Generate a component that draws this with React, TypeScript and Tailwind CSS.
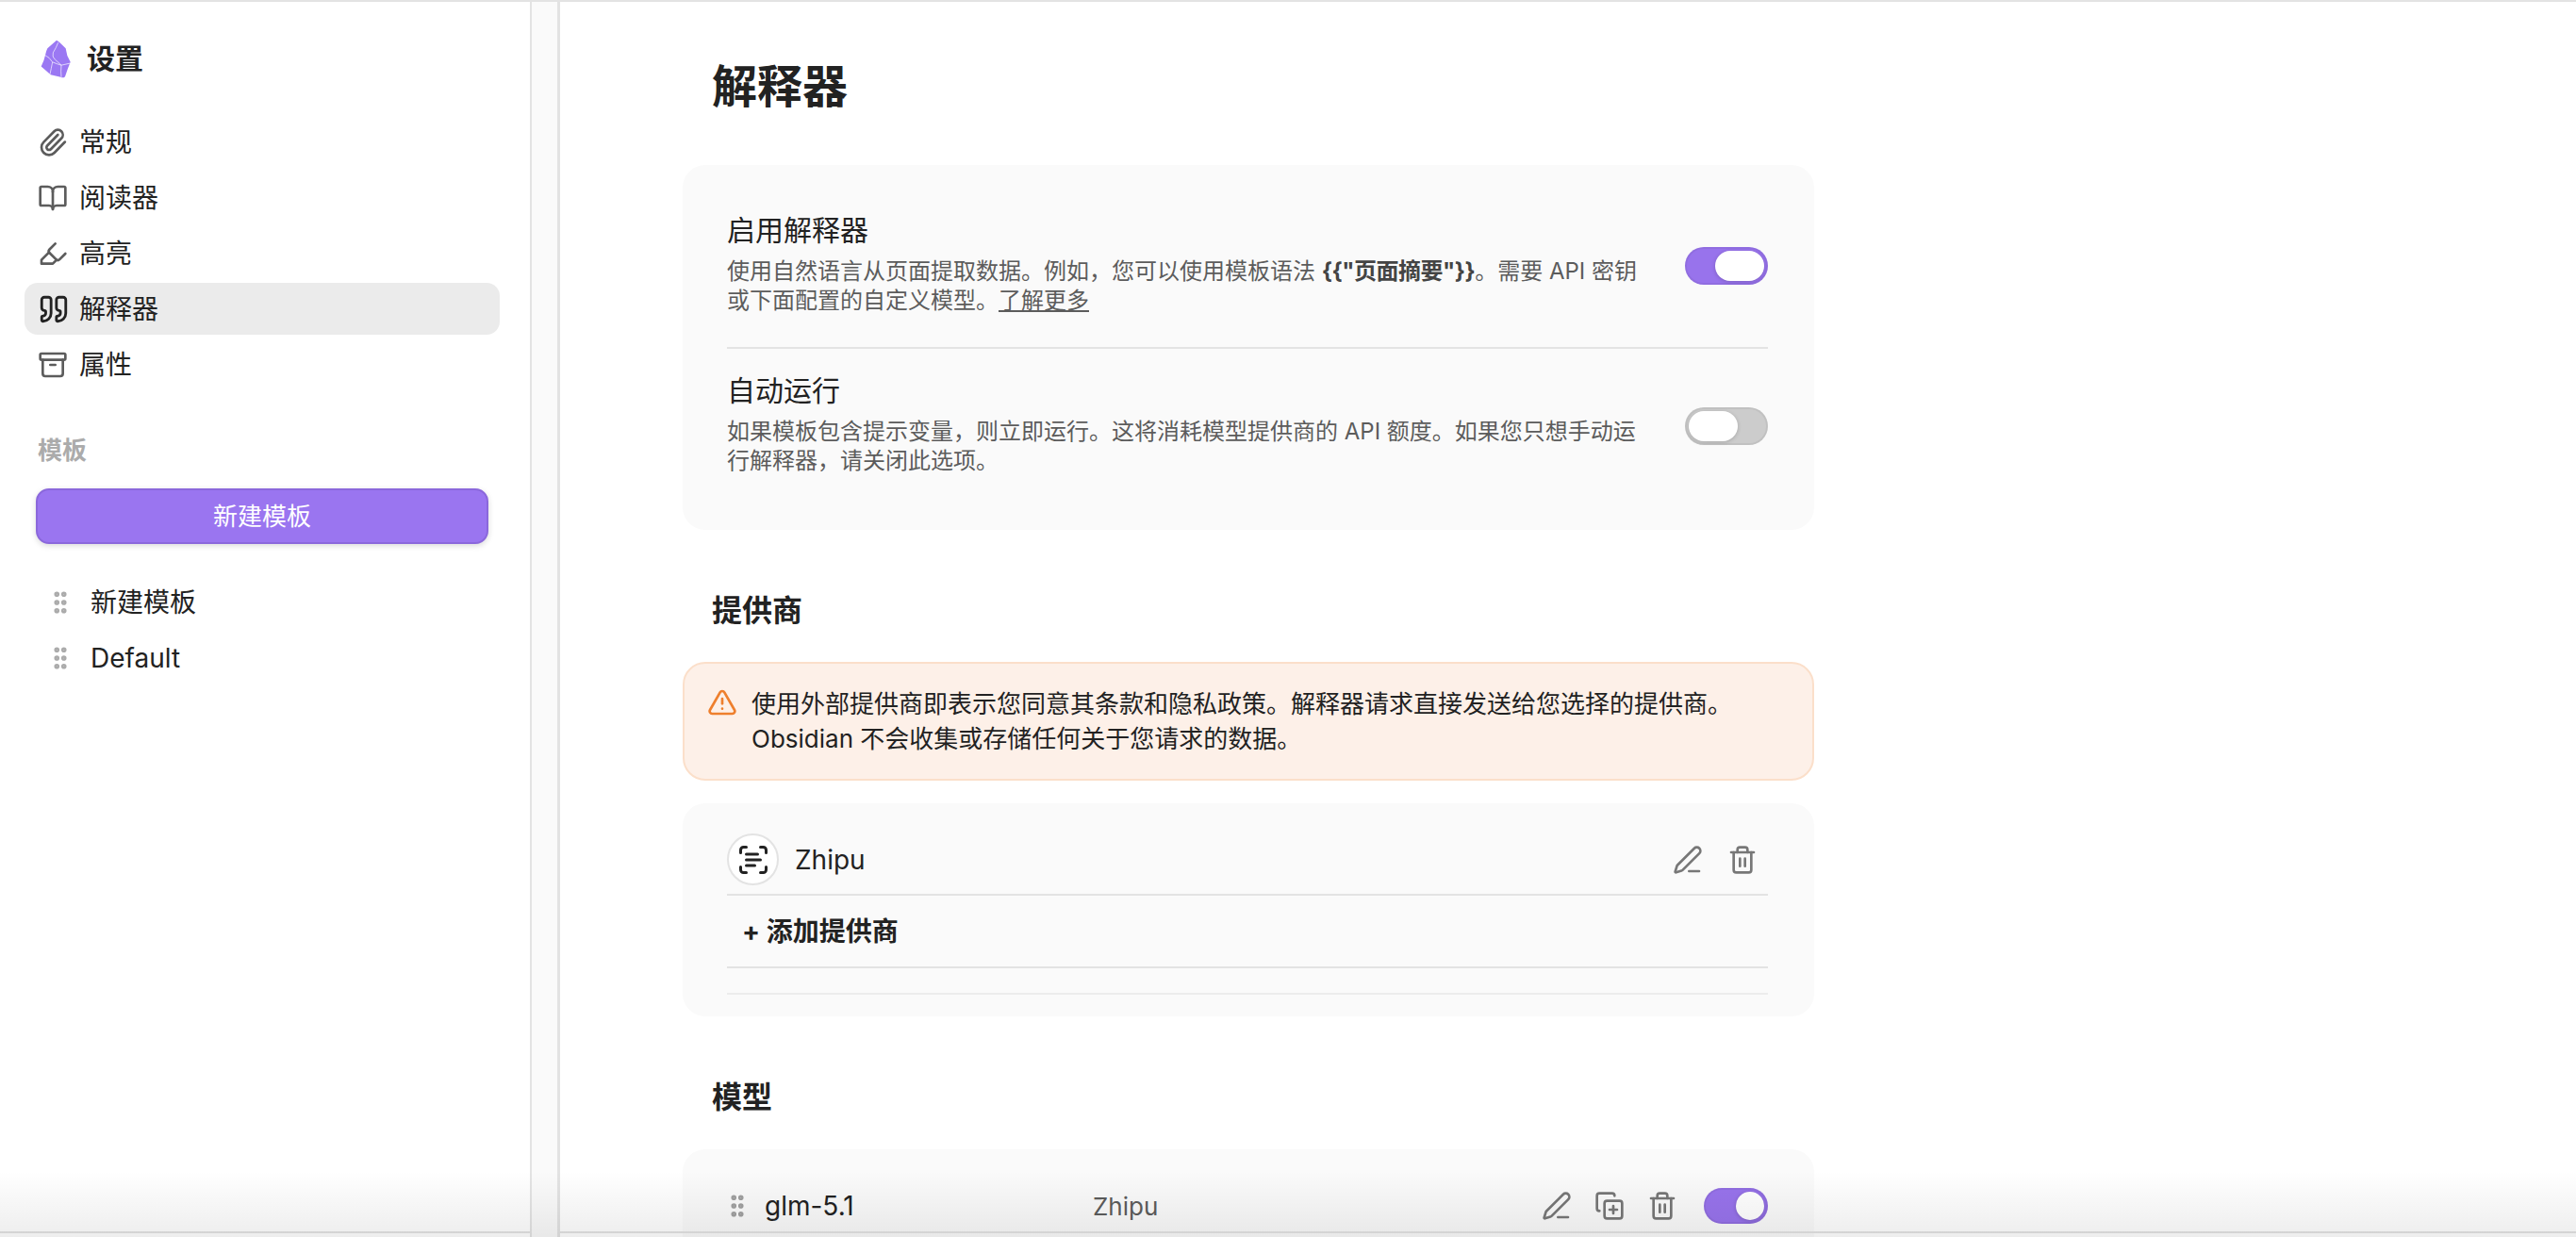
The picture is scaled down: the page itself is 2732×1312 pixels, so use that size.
import { Archive, BookOpen, CopyPlus, GripVertical, Highlighter, Paperclip, PenLine, Quote, ScanText, Trash2, TriangleAlert } from "lucide-react";
import type { ReactNode } from "react";

const navItems = [
  { label: "常规", icon: Paperclip, size: 32 },
  { label: "阅读器", icon: BookOpen, size: 32 },
  { label: "高亮", icon: Highlighter, size: 32 },
  { label: "解释器", icon: Quote, size: 34, active: true },
  { label: "属性", icon: Archive, size: 32 },
];

const ObsidianLogo = () => (
  <svg viewBox="70 35 96 122" className="w-[32px] h-[41px] shrink-0">
    <path d="M121 37 Q127 40 133 46 L150 62 Q152 84 165 106 Q156 128 148 152 Q142 158 134 154 L102 146 Q86 132 72 120 Q82 100 86 80 Q88 70 92 62 Z" fill="#9b78f3" />
    <path d="M126 44 Q120 60 110 76 Q106 90 116 98 Q128 108 136 116 M84 84 Q98 90 108 106 Q104 126 100 145 M108 106 Q122 112 136 116 L163 110 M136 116 Q134 136 136 154" fill="none" stroke="#fff" strokeWidth="2" />
  </svg>
);

const Toggle = ({ on, small }: { on?: boolean; small?: boolean }) => (
  <div
    className={`${small ? "w-[68px] h-[38px]" : "w-[88px] h-[40px]"} ${on ? "justify-end bg-[#9873ec]" : "justify-start bg-[#cccccc]"} shrink-0 flex items-center p-[4px] rounded-full shadow-[inset_0_0_0_2px_rgba(0,0,0,0.05)]`}
  >
    <div className={`${small ? "w-[30px] h-[30px]" : "w-[52px] h-[32px]"} bg-white rounded-full shadow-[0_1px_4px_rgba(0,0,0,0.18)]`} />
  </div>
);

const Card = ({ children }: { children: ReactNode }) => (
  <div className="bg-[#fafafa] rounded-[24px] pl-[47px] pr-[49px]">{children}</div>
);

const Setting = ({ title, children, on }: { title: string; children: ReactNode; on?: boolean }) => (
  <div className="flex items-center justify-between">
    <div className="whitespace-nowrap">
      <div className="text-[30px] leading-[36px] text-[#222222]">{title}</div>
      <div className="mt-[10px] text-[24px] leading-[31px] text-[#5c5c5c]">{children}</div>
    </div>
    <div className="mt-[3px]">
      <Toggle on={on} />
    </div>
  </div>
);

const Heading = ({ children }: { children: ReactNode }) => (
  <h2 className="ml-[31px] mt-[66px] text-[32px] leading-[40px] font-bold text-[#222222]">{children}</h2>
);

export default function App() {
  return (
    <div
      className="relative w-[2732px] h-[1312px] overflow-hidden bg-white border-t-2 border-[#e3e3e3] flex"
      style={{ fontFamily: 'Inter, "Noto Sans CJK SC", sans-serif' }}
      lang="zh-CN"
    >
      {/* Sidebar */}
      <aside className="relative w-[564px] shrink-0 border-r-2 border-[#e3e3e3] pt-[38px]">
        <div className="flex items-center gap-[17px] pl-[43px] h-[44px]">
          <ObsidianLogo />
          <span className="text-[30px] leading-[44px] font-bold text-[#222222]">设置</span>
        </div>
        <nav className="mt-[39px] ml-[26px] w-[504px] flex flex-col gap-[4px]">
          {navItems.map(({ label, icon: Icon, size, active }) => (
            <div
              key={label}
              className={`h-[55px] flex items-center pl-[14px] rounded-[14px] text-[28px] text-[#222222] ${active ? "bg-[#ebebeb]" : ""}`}
            >
              <span className="w-[44px] shrink-0">
                <Icon size={size} strokeWidth={2} className={active ? "text-[#222222]" : "text-[#5c5c5c]"} />
              </span>
              <span>{label}</span>
            </div>
          ))}
        </nav>
        <div className="mt-[48px] ml-[40px] text-[26px] leading-[32px] font-bold text-[#ababab]">模板</div>
        <button className="mt-[24px] ml-[38px] w-[480px] h-[59px] rounded-[14px] bg-[#9a75f0] border-2 border-[#8b68dc] text-white text-[26px] shadow-[0_2px_6px_rgba(0,0,0,0.15)]">
          新建模板
        </button>
        <div className="mt-[34px] ml-[49px] flex flex-col gap-[4px]">
          {["新建模板", "Default"].map((name) => (
            <div key={name} className="h-[55px] flex items-center gap-[17px] text-[28px] text-[#222222]">
              <GripVertical size={30} strokeWidth={2.5} className="text-[#ababab]" />
              <span>{name}</span>
            </div>
          ))}
        </div>
        <div className="absolute left-0 right-0 bottom-[4px] h-[2px] bg-[#e3e3e3]" />
      </aside>

      {/* Scroll gutter */}
      <div className="w-[30px] shrink-0 bg-[#fafafa] border-r-[3px] border-[#e3e3e3]" />

      {/* Main */}
      <main className="relative flex-1 pt-[60px] pl-[130px]">
        <div className="w-[1200px]">
          <h1 className="ml-[31px] text-[48px] leading-[60px] font-bold text-[#222222]">解释器</h1>

          <div className="mt-[53px] bg-[#fafafa] rounded-[24px] pl-[47px] pr-[49px] pt-[51px] h-[387px]">
            <Setting title="启用解释器" on>
              {"使用自然语言从页面提取数据。例如\uFF0C您可以使用模板语法 "}
              <b className="font-bold tracking-[-0.5px] text-[#444444]">{'{{"页面摘要"}}'}</b>。需要 API 密钥
              <br />
              或下面配置的自定义模型。<span className="underline">了解更多</span>
            </Setting>
            <div className="h-[2px] bg-[#e3e3e3] mt-[34px] mb-[26px]" />
            <Setting title="自动运行">
              {"如果模板包含提示变量\uFF0C则立即运行。这将消耗模型提供商的 API 额度。如果您只想手动运"}
              <br />
              {"行解释器\uFF0C请关闭此选项。"}
            </Setting>
          </div>

          <Heading>提供商</Heading>
          <div className="mt-[34px] flex gap-[15px] bg-[#fdf0e8] border-2 border-[#fbdfca] rounded-[24px] pl-[24px] py-[24px] text-[26px] leading-[37px] text-[#222222]">
            <TriangleAlert size={32} strokeWidth={2} className="text-[#ee7f2d] mt-[1px] shrink-0" />
            <div className="whitespace-nowrap">
              使用外部提供商即表示您同意其条款和隐私政策。解释器请求直接发送给您选择的提供商。
              <br />
              Obsidian 不会收集或存储任何关于您请求的数据。
            </div>
          </div>

          <div className="mt-[24px]">
            <Card>
              <div className="pt-[32px] pb-[9px] flex items-center">
                <div className="w-[55px] h-[55px] rounded-full bg-white border-2 border-[#e3e3e3] flex items-center justify-center">
                  <ScanText size={36} strokeWidth={2} className="text-[#222222]" />
                </div>
                <span className="ml-[17px] text-[28px] text-[#222222]">Zhipu</span>
                <div className="ml-auto mr-[11px] flex items-center gap-[26px] text-[#777777]">
                  <PenLine size={32} strokeWidth={2} />
                  <Trash2 size={32} strokeWidth={2} />
                </div>
              </div>
              <div className="h-[2px] bg-[#e3e3e3]" />
              <div className="h-[75px] pl-[16px] flex items-center text-[28px] font-bold text-[#222222]">+ 添加提供商</div>
              <div className="h-[2px] bg-[#e3e3e3]" />
              <div className="mt-[26px] h-[2px] bg-[#ececec]" />
              <div className="h-[23px]" />
            </Card>
          </div>

          <Heading>模型</Heading>
          <div className="mt-[35px]">
            <Card>
              <div className="flex items-center h-[120px]">
                <GripVertical size={30} strokeWidth={2.5} className="text-[#a0a0a0] -ml-[4px]" />
                <span className="ml-[14px] w-[348px] text-[28px] text-[#222222]">glm-5.1</span>
                <span className="text-[26px] text-[#5c5c5c]">Zhipu</span>
                <div className="ml-auto flex items-center gap-[24px] text-[#777777]">
                  <PenLine size={32} strokeWidth={2} />
                  <CopyPlus size={32} strokeWidth={2} />
                  <Trash2 size={32} strokeWidth={2} />
                  <div className="ml-[4px]">
                    <Toggle on small />
                  </div>
                </div>
              </div>
            </Card>
          </div>
        </div>
        <div className="absolute left-0 right-0 bottom-[4px] h-[2px] bg-[#e3e3e3]" />
      </main>

      {/* Window edge fade */}
      <div className="absolute left-0 right-0 bottom-0 h-[70px] pointer-events-none bg-gradient-to-b from-transparent to-black/[0.07]" />
    </div>
  );
}
